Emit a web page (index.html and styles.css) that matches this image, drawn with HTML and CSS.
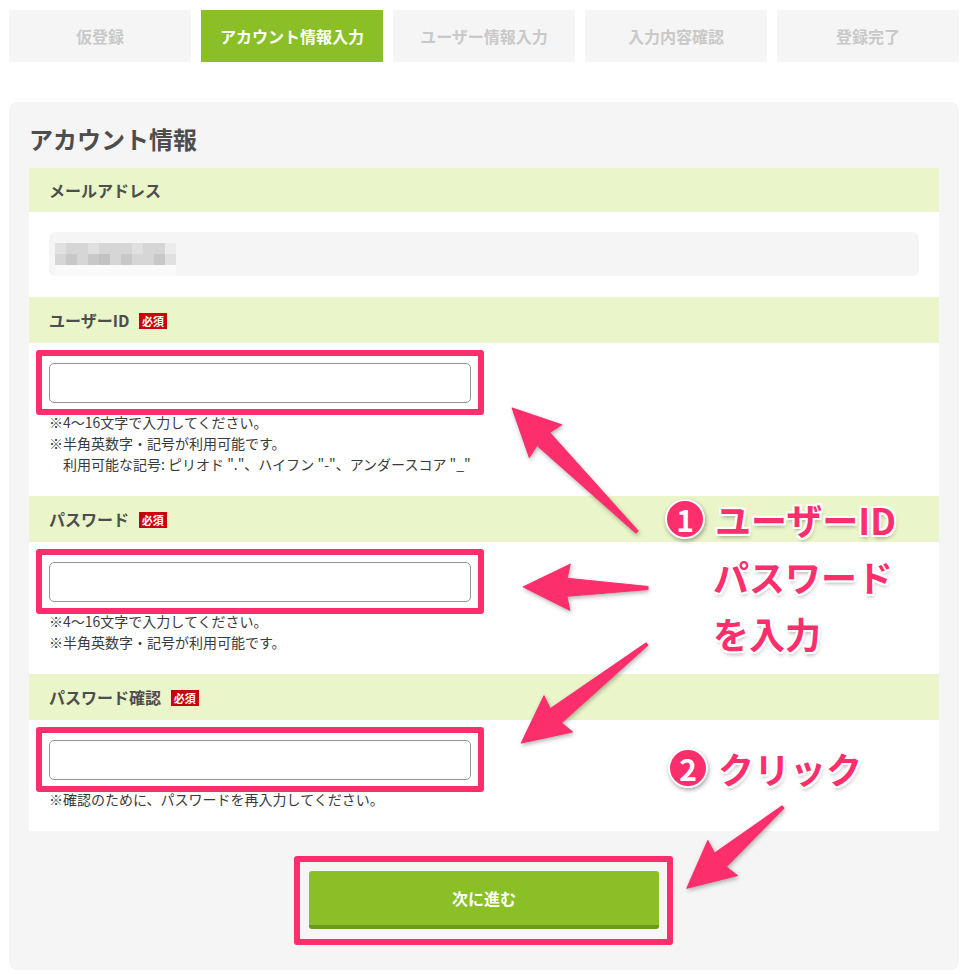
FILE: index.html
```html
<!DOCTYPE html>
<html lang="ja">
<head>
    <meta charset="UTF-8">
    <meta name="viewport" content="width=device-width, initial-scale=1.0">
    <title>アカウント情報入力</title>
    <link rel="stylesheet" href="styles.css">
</head>
<body>
    <div class="page">
        <ul class="steps">
            <li>仮登録</li>
            <li class="current">アカウント情報入力</li>
            <li>ユーザー情報入力</li>
            <li>入力内容確認</li>
            <li>登録完了</li>
        </ul>

        <div class="panel">
            <h2 class="panel-title">アカウント情報</h2>
            <form class="form" action="#">
                <div class="field-head field-head-plain">メールアドレス</div>
                <div class="field-body">
                    <div class="readonly">
                        <div class="mosaic">
                            <span class="s3"></span><span class="s2"></span><span class="s2"></span><span class="s3"></span><span class="s2"></span><span class="s2"></span><span class="s2"></span><span class="s3"></span><span class="s2"></span><span class="s2"></span><span class="s4"></span>
                            <span class="s2"></span><span class="s1"></span><span class="s2"></span><span class="s1"></span><span class="s0"></span><span class="s2"></span><span class="s1"></span><span class="s2"></span><span class="s2"></span><span class="s1"></span><span class="s3"></span>
                            <span class="s5"></span><span class="s5"></span><span class="s5"></span><span class="s5"></span><span class="s5"></span><span class="s5"></span><span class="s5"></span><span class="s5"></span><span class="s5"></span><span class="s5"></span><span class="s5"></span>
                        </div>
                    </div>
                </div>

                <div class="field-head">ユーザーID <span class="req">必須</span></div>
                <div class="field-body">
                    <div class="input-wrap">
                        <input type="text" name="userid" autocomplete="off">
                        <span class="mark"></span>
                    </div>
                    <p class="hint">※4〜16文字で入力してください。<br>※半角英数字・記号が利用可能です。<br><span class="indent">利用可能な記号: ピリオド "."、ハイフン "-"、アンダースコア "_"</span></p>
                </div>

                <div class="field-head">パスワード <span class="req">必須</span></div>
                <div class="field-body">
                    <div class="input-wrap">
                        <input type="password" name="pass">
                        <span class="mark"></span>
                    </div>
                    <p class="hint">※4〜16文字で入力してください。<br>※半角英数字・記号が利用可能です。</p>
                </div>

                <div class="field-head">パスワード確認 <span class="req">必須</span></div>
                <div class="field-body">
                    <div class="input-wrap">
                        <input type="password" name="repass">
                        <span class="mark"></span>
                    </div>
                    <p class="hint">※確認のために、パスワードを再入力してください。</p>
                </div>
            </form>
            <div class="actions">
                <div class="btn-wrap">
                    <button class="btn" type="button">次に進む</button>
                    <span class="mark mark-btn"></span>
                </div>
            </div>
        </div>

        <!-- annotations -->
        <svg class="arrows" width="969" height="974" viewBox="0 0 969 974">
            <polygon transform="translate(637 532) rotate(-135.2)" points="0,-1.5 132,-9 129,-23 176,0 129,23 132,9 0,1.5"/>
            <polygon transform="translate(648 588) rotate(180.5)" points="0,-1.5 81,-9 78,-23 125,0 78,23 81,9 0,1.5"/>
            <polygon transform="translate(647 644) rotate(141.8)" points="0,-1.5 116,-9 113,-23 160,0 113,23 116,9 0,1.5"/>
            <polygon transform="translate(783 807) rotate(139.8)" points="0,-1.5 82,-9 79,-23 126,0 79,23 82,9 0,1.5"/>
        </svg>
        <div class="callout callout-1">
            <div class="callout-line"><span class="num">1</span>ユーザーID</div>
            <div class="callout-line callout-sub">パスワード</div>
            <div class="callout-line callout-sub">を入力</div>
        </div>
        <div class="callout callout-2">
            <div class="callout-line"><span class="num">2</span>クリック</div>
        </div>
    </div>
</body>
</html>
```

FILE: styles.css
```css
body{
    margin: 0;
    padding: 0;
    background: #fff;
    font-family: "Noto Sans CJK JP", "Noto Sans", sans-serif;
    color: #333;
}
.page{
    position: relative;
    width: 969px;
    height: 974px;
    padding: 10px 10px 0 9px;
    box-sizing: border-box;
    overflow: hidden;
}

/* step tabs */
.steps{
    display: grid;
    grid-template-columns: repeat(5, 1fr);
    gap: 10px;
    margin: 0;
    padding: 0;
    list-style: none;
}
.steps li{
    height: 52px;
    line-height: 52px;
    text-align: center;
    background: #f5f5f5;
    color: #c9c9c9;
    font-size: 16px;
    font-weight: bold;
}
.steps li.current{
    background: #8abf27;
    color: #fff;
}

/* panel */
.panel{
    margin-top: 40px;
    padding: 20px 20px 41px;
    background: #f5f5f5;
    border-radius: 8px;
}
.panel-title{
    margin: 0 0 12px;
    font-size: 24px;
    line-height: 34px;
    color: #4d4d4d;
}
.form{
    background: #fff;
}
.field-head{
    padding: 13px 20px;
    line-height: 20px;
    background: #eaf5c9;
    color: #4d4d4d;
    font-size: 16px;
    font-weight: bold;
}
.field-head-plain{
    padding: 12px 20px;
}
.req{
    display: inline-block;
    margin-left: 6px;
    padding: 0 3px;
    line-height: 16px;
    vertical-align: 1px;
    background: #c8000b;
    color: #fff;
    font-size: 11px;
    font-weight: bold;
}
.field-body{
    padding: 20px 20px 21px;
}
.readonly{
    height: 44px;
    padding: 11px 0 0 6px;
    box-sizing: border-box;
    background: #f5f5f5;
    border-radius: 6px;
}
.mosaic{
    display: grid;
    grid-template-columns: repeat(11, 11px);
    grid-auto-rows: 11px;
    width: 121px;
}
.mosaic .s0{ background: #c2c2c2; }
.mosaic .s1{ background: #c8c8c8; }
.mosaic .s2{ background: #d6d6d6; }
.mosaic .s3{ background: #e0e0e0; }
.mosaic .s4{ background: #ebebeb; }
.mosaic .s5{ background: #fafafa; }

.input-wrap{
    position: relative;
    width: 422px;
}
.input-wrap input{
    display: block;
    width: 100%;
    height: 40px;
    box-sizing: border-box;
    border: 1px solid #959595;
    border-radius: 5px;
    background: #fff;
}
.hint{
    margin: 9px 0 0;
    font-size: 14px;
    line-height: 21px;
    color: #3a3a3a;
}
.indent{
    padding-left: 1em;
}

/* next button */
.actions{
    display: flex;
    justify-content: center;
    margin-top: 40px;
}
.btn-wrap{
    position: relative;
}
.btn{
    display: block;
    width: 350px;
    height: 58px;
    border: none;
    border-bottom: 4px solid #6b9a1a;
    border-radius: 3px;
    background: #8abf27;
    color: #fff;
    font-family: inherit;
    font-size: 16px;
    font-weight: bold;
}

/* annotation layer */
.mark{
    position: absolute;
    top: -13px;
    left: -13px;
    right: -13px;
    bottom: -12px;
    border: 6px solid #fd2e6c;
    border-radius: 3px;
}
.mark-btn{
    top: -15px;
    left: -15px;
    right: -14px;
    bottom: -16px;
}
.arrows{
    position: absolute;
    top: 0;
    left: 0;
    pointer-events: none;
    filter: drop-shadow(1px 2px 2px rgba(0,0,0,.3));
}
.arrows polygon{
    fill: #fd2e6c;
    stroke: #fd2e6c;
    stroke-width: 1;
    stroke-linejoin: round;
}
.callout{
    position: absolute;
    color: #fd2e6c;
    font-size: 36px;
    font-weight: bold;
    text-shadow: -2px -2px 0 #fff, 2px -2px 0 #fff, -2px 2px 0 #fff, 2px 2px 0 #fff,
        0 -2px 0 #fff, 0 2px 0 #fff, -2px 0 0 #fff, 2px 0 0 #fff,
        1px 3px 4px rgba(0,0,0,.35);
}
.callout-1{
    left: 665px;
    top: 497px;
}
.callout-2{
    left: 668px;
    top: 746px;
}
.callout-line{
    display: flex;
    align-items: center;
    height: 44px;
    margin-bottom: 13px;
    line-height: 44px;
    white-space: nowrap;
}
.callout-sub{
    padding-left: 48px;
}
.num{
    display: inline-flex;
    align-items: center;
    justify-content: center;
    width: 36px;
    height: 36px;
    margin-right: 10px;
    border: 2px solid #fff;
    border-radius: 50%;
    background: #fd2e6c;
    color: #fff;
    font-size: 30px;
    line-height: 1;
    text-shadow: none;
    box-shadow: 1px 2px 4px rgba(0,0,0,.35);
}
```
